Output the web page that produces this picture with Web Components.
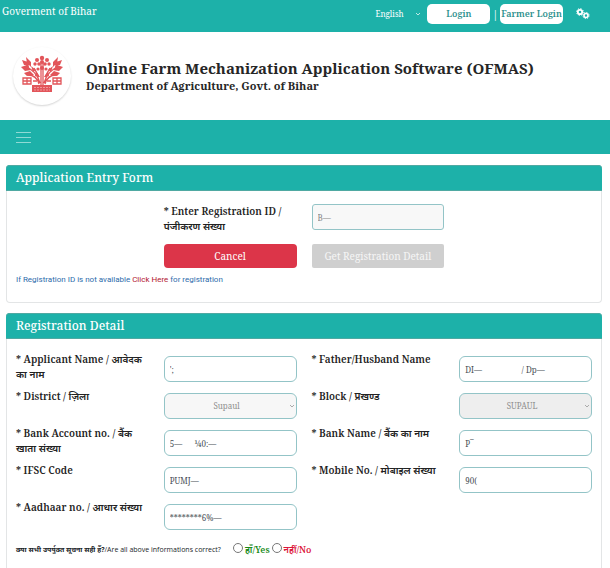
<!DOCTYPE html>
<html lang="en">
<head>
<meta charset="utf-8">
<meta name="viewport" content="width=device-width, initial-scale=1">
<title>OFMAS</title>
<style>
    body {
        margin: 0;
        background: #fff;
        color: #212529;
        font-family: "Noto Serif", "DejaVu Serif Condensed", "DejaVu Serif", "Noto Sans", serif;
        font-size: 10px;
        line-height: 15px;
    }
    main {
        display: flex;
        flex-direction: column;
        gap: 10px;
        padding: 11px 8px 0 6px;
    }
    .entry {
        display: grid;
        grid-template-columns: repeat(4, 1fr);
        gap: 14px 15px;
        padding-top: 2px;
    }
    .entry > * { grid-column: 2 / span 2; }
    .details {
        display: grid;
        grid-template-columns: repeat(2, 1fr);
        gap: 7px 15px;
        padding-top: 2px;
    }
</style>
</head>
<body>
<top-bar></top-bar>
<site-header>
    <span slot="title">Online Farm Mechanization Application Software (OFMAS)</span>
    <span slot="department">Department of Agriculture, Govt. of Bihar</span>
</site-header>
<nav-strip></nav-strip>
<main>
    <form-card>
        <span slot="title">Application Entry Form</span>
        <div class="entry">
            <form-field label="* Enter Registration ID / पंजीकरण संख्या" value="B—" square disabled></form-field>
            <entry-actions></entry-actions>
        </div>
        <register-hint></register-hint>
    </form-card>
    <form-card>
        <span slot="title">Registration Detail</span>
        <div class="details">
            <form-field label="* Applicant Name / आवेदक का नाम" value="';"></form-field>
            <form-field label="* Father/Husband Name" value="DI—                   / Dp—"></form-field>
            <form-field label="* District / ज़िला" value="Supaul" type="select"></form-field>
            <form-field label="* Block / प्रखण्ड" value="SUPAUL" type="select" shade></form-field>
            <form-field label="* Bank Account no. / बैंक खाता संख्या" value="5—      ¼0:—"></form-field>
            <form-field label="* Bank Name / बैंक का नाम" value="P‾"></form-field>
            <form-field label="* IFSC Code" value="PUMJ—"></form-field>
            <form-field label="* Mobile No. / मोबाइल संख्या" value="90("></form-field>
            <form-field label="* Aadhaar no. / आधार संख्या" value="********6%—"></form-field>
        </div>
        <confirm-row></confirm-row>
    </form-card>
</main>

<script>
function attach(el, html) {
    const $template = document.createElement("template");
    $template.innerHTML = html;
    el.attachShadow({mode: "open"});
    el.shadowRoot.appendChild($template.content.cloneNode(true));
}

class TopBar extends HTMLElement {
    constructor() {
        super();
        attach(this, /*html*/ `
            <style>
                :host {
                    display: flex;
                    justify-content: space-between;
                    height: 32px;
                    padding: 4px 20px 0 2px;
                    box-sizing: border-box;
                    background: #1db1a9;
                    color: #fff;
                }
                .tools {
                    display: flex;
                    align-items: center;
                    gap: 2px;
                    height: 20px;
                }
                .lang {
                    display: flex;
                    align-items: center;
                    margin-right: 4px;
                }
                select {
                    appearance: none;
                    width: 40px;
                    border: 0;
                    padding: 0;
                    background: none;
                    color: #fff;
                    font: 8px/16px "Noto Serif", "DejaVu Serif Condensed", serif;
                }
                button {
                    width: 63px;
                    height: 20px;
                    padding: 0;
                    border: 0;
                    border-radius: 5px;
                    background: #fff;
                    color: #2b8f8c;
                    font: 600 9px/16px "Noto Serif", "DejaVu Serif Condensed", serif;
                    white-space: nowrap;
                    overflow: hidden;
                }
                .cogs { margin-left: 11px; }
            </style>
            <span>Goverment of Bihar</span>
            <div class="tools">
                <div class="lang">
                    <select aria-label="Language"><option>English</option></select>
                    <svg width="6" height="4" viewBox="0 0 6 4"><path d="M1 1l2 2 2-2" fill="none" stroke="#bfe9e6"/></svg>
                </div>
                <button type="button">Login</button>
                <span>|</span>
                <button type="button">Farmer Login</button>
                <svg class="cogs" width="14" height="12" viewBox="0 0 14 12" fill="none" stroke="#fff">
                    <circle cx="4" cy="4" r="2.2" stroke-width="1.8"/>
                    <circle cx="4" cy="4" r="3.4" stroke-width="1" stroke-dasharray="1.3 1.37"/>
                    <circle cx="10" cy="7.5" r="2" stroke-width="1.6"/>
                    <circle cx="10" cy="7.5" r="3.1" stroke-width="1" stroke-dasharray="1.2 1.23"/>
                </svg>
            </div>
        `);
    }
}

class SiteHeader extends HTMLElement {
    constructor() {
        super();
        attach(this, /*html*/ `
            <style>
                :host {
                    display: flex;
                    align-items: center;
                    gap: 15px;
                    height: 88px;
                    padding: 0 13px;
                    box-sizing: border-box;
                    background: #fff;
                }
                .logo {
                    display: grid;
                    place-items: center;
                    width: 58px;
                    height: 58px;
                    padding-bottom: 4px;
                    box-sizing: border-box;
                    border-radius: 50%;
                    box-shadow: 0 1px 2px #d4d4d4;
                }
                h1, h2 { margin: 0; font-weight: bold; color: #262626; }
                h1 { font-size: 15px; line-height: 20px; }
                h2 { font-size: 11px; line-height: 16px; }
            </style>
            <div class="logo">
                <svg width="42" height="38" viewBox="0 0 42 38" fill="none" stroke="#e2555a" stroke-width="1.3">
                    <path d="M20 30V7M22 30V7M19 28C16 18 11 15 6 12M23 28c3-10 8-13 13-16M18 29C16 22 12 20 7 20M24 29c2-7 6-9 11-9M18 22l-5-9M24 22l5-9"/>
                    <g fill="#e2555a" stroke="none">
                        <circle cx="21" cy="3" r="2.2"/><circle cx="16" cy="5" r="2"/><circle cx="26" cy="5" r="2"/>
                        <circle cx="14" cy="9" r="1.7"/><circle cx="28" cy="9" r="1.7"/>
                        <circle cx="18" cy="9" r="1.8"/><circle cx="24" cy="9" r="1.8"/><circle cx="21" cy="13" r="2"/>
                        <circle cx="17" cy="14" r="1.6"/><circle cx="25" cy="14" r="1.6"/><circle cx="21" cy="7" r="2"/>
                        <path d="M1 5l6 2 1 5-5-2zM5 2l5 5v5L6 8zM0 12l6-2 4 5-6 1zM3 18l6-2 4 4-7 1zM41 5l-6 2-1 5 5-2zM37 2l-5 5v5l4-4zM42 12l-6-2-4 5 6 1zM39 18l-6-2-4 4 7 1zM15 16l4 6-5-1zM27 16l-4 6 5-1zM10 11l5 4-3 2zM32 11l-5 4 3 2z"/>
                        <rect x="11" y="30" width="20" height="7"/>
                    </g>
                    <path d="M2 23h8v6H2zM2 26h8M6 23v6M32 23h8v6h-8zM32 26h8M36 23v6M12 26h4M26 26h4"/>
                    <path d="M13 32.500h16M13 35h16" stroke="#f4a7a9" stroke-width=".8" stroke-dasharray="2 1"/>
                </svg>
            </div>
            <div>
                <h1><slot name="title"></slot></h1>
                <h2><slot name="department"></slot></h2>
            </div>
        `);
    }
}

class NavStrip extends HTMLElement {
    constructor() {
        super();
        attach(this, /*html*/ `
            <style>
                :host {
                    display: flex;
                    align-items: center;
                    height: 34px;
                    padding: 0 16px;
                    background: #1db1a9;
                }
                button { display: flex; padding: 0; border: 0; background: none; }
            </style>
            <button type="button" aria-label="Menu">
                <svg width="15" height="14" viewBox="0 0 15 14" stroke="#8fdad5" stroke-width="1"><path d="M0 2.500h15M0 7.500h15M0 12.500h15"/></svg>
            </button>
        `);
    }
}

class FormCard extends HTMLElement {
    constructor() {
        super();
        attach(this, /*html*/ `
            <style>
                :host {
                    display: block;
                    border: 1px solid #e3e5e6;
                    border-top: 0;
                    border-radius: 4px;
                }
                h3 {
                    margin: 0 -1px;
                    padding: 0 10px;
                    height: 26px;
                    border-radius: 4px 4px 0 0;
                    background: #1db1a9;
                    box-shadow: inset 0 1px #4fa9a2, inset 0 -1px #4fa9a2;
                    color: #fff;
                    font-size: 12px;
                    font-weight: 500;
                    line-height: 25px;
                }
                .body { padding: 11px 9px 10px; }
            </style>
            <h3><slot name="title"></slot></h3>
            <div class="body"><slot></slot></div>
        `);
    }
}

class FormField extends HTMLElement {
    constructor() {
        super();
        attach(this, /*html*/ `
            <style>
                :host {
                    display: grid;
                    grid-template-columns: 1fr 1fr;
                    gap: 15px;
                    min-height: 30px;
                    align-items: start;
                }
                label { font-weight: 600; color: #222; }
                .box { position: relative; margin-top: 4px; }
                input, select {
                    appearance: none;
                    display: block;
                    width: 100%;
                    height: 26px;
                    padding: 0 5px;
                    box-sizing: border-box;
                    border: 1px solid #93c4c7;
                    border-radius: 6px;
                    background: #fff;
                    color: #495057;
                    font: 8px/16px "Noto Serif", "DejaVu Serif Condensed", serif;
                }
                select { text-align-last: center; padding: 0 12px 0 5px; }
                select:disabled { background: #f7f7f7; color: #8f8f8f; opacity: 1; }
                :host([shade]) select { background: #eee; }
                svg { position: absolute; right: 2px; top: 11px; }
                :host([square]) input { border-radius: 3px; background: #f8f8f8; color: #888; }
                :host([square]) .box { margin-top: 0; }
            </style>
            <label for="control"></label>
            <div class="box"></div>
        `);
    }

    connectedCallback() {
        const box = this.shadowRoot.querySelector(".box");
        const value = this.getAttribute("value");
        this.shadowRoot.querySelector("label").textContent = this.getAttribute("label");
        if (this.getAttribute("type") == "select") {
            box.innerHTML = `
                <select id="control" disabled><option>${value}</option></select>
                <svg width="6" height="4" viewBox="0 0 6 4"><path d="M1 1l2 2 2-2" fill="none" stroke="#aaa"/></svg>
            `;
        } else {
            box.innerHTML = `<input id="control" type="text">`;
            box.firstChild.value = value;
            box.firstChild.disabled = this.hasAttribute("disabled");
        }
    }
}

class EntryActions extends HTMLElement {
    constructor() {
        super();
        attach(this, /*html*/ `
            <style>
                :host { display: grid; grid-template-columns: 1fr 1fr; gap: 15px; margin-top: -4px; }
                button {
                    height: 24px;
                    padding: 0;
                    border: 0;
                    border-radius: 4px;
                    background: #dc3549;
                    color: #fff;
                    font: 10px/16px "Noto Serif", "DejaVu Serif Condensed", serif;
                }
                button:disabled { border-radius: 2px; background: #cfcfcf; color: #f6f6f6; }
            </style>
            <button type="button">Cancel</button>
            <button type="button" disabled>Get Registration Detail</button>
        `);
    }
}

class RegisterHint extends HTMLElement {
    constructor() {
        super();
        attach(this, /*html*/ `
            <style>
                :host {
                    display: block;
                    padding: 4px 0 5px;
                    color: #2c6bab;
                    font-family: Roboto, sans-serif;
                    font-size: 8px;
                }
                a { color: #b3152e; text-decoration: none; }
            </style>
            If Registration ID is not available <a href="#">Click Here</a> for registration
        `);
    }
}

class ConfirmRow extends HTMLElement {
    constructor() {
        super();
        attach(this, /*html*/ `
            <style>
                :host { display: flex; align-items: center; padding: 12px 0 8px; font-size: 7px; }
                .hindi { font-weight: bold; }
                .question { margin-right: 12px; font-family: "Open Sans", "Noto Sans", sans-serif; }
                input {
                    appearance: none;
                    width: 10px;
                    height: 10px;
                    margin: 0 2px 3px 0;
                    border: 1px solid #777;
                    border-radius: 50%;
                }
                label { margin-right: 2px; font-size: 9px; font-weight: 600; }
                .yes { color: #178a17; }
                .no { color: #dc1438; }
            </style>
            <span class="question"><span class="hindi">क्या सभी उपर्युक्त सूचना सही हैं?</span>/Are all above informations correct?</span>
            <input type="radio" name="correct" id="yes"><label class="yes" for="yes">हाँ/Yes</label>
            <input type="radio" name="correct" id="no"><label class="no" for="no">नहीं/No</label>
        `);
    }
}

window.customElements.define("top-bar", TopBar)
window.customElements.define("site-header", SiteHeader)
window.customElements.define("nav-strip", NavStrip)
window.customElements.define("form-card", FormCard)
window.customElements.define("form-field", FormField)
window.customElements.define("entry-actions", EntryActions)
window.customElements.define("register-hint", RegisterHint)
window.customElements.define("confirm-row", ConfirmRow)
</script>
</body>
</html>
